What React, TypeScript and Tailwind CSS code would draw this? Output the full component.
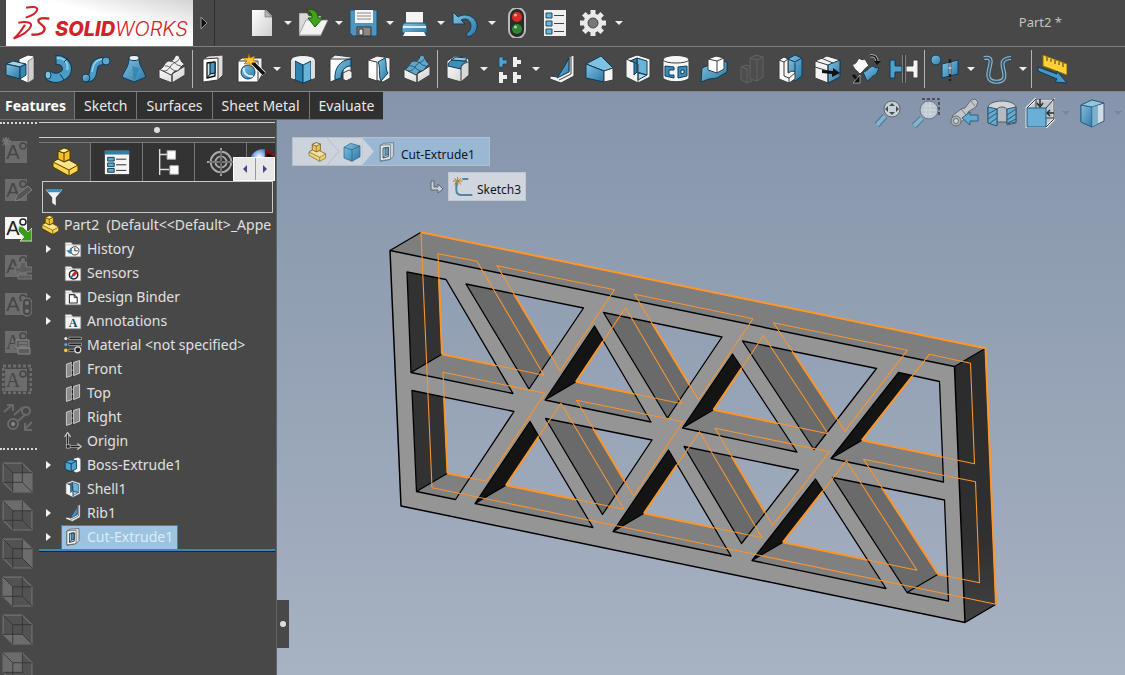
import { useState, type ReactNode } from 'react';

type Point = [number, number];

const OUT = '#0f3a57';
const INK = '#3c3c3c';

function Icon({ children, className = 'size-[30px]' }: { children: ReactNode; className?: string }) {
  return (
    <svg viewBox="0 0 30 30" className={`${className} shrink-0`} strokeLinejoin="round" fill="none" aria-hidden="true">
      {children}
    </svg>
  );
}

// gradients shared by all icons
function SharedDefs() {
  return (
    <svg className="absolute size-0" aria-hidden="true">
      <defs>
        <linearGradient id="blue" x1="0" y1="0" x2="1" y2="1">
          <stop offset="0" stopColor="#84c3e2" />
          <stop offset="1" stopColor="#2879a8" />
        </linearGradient>
        <linearGradient id="white" x1="0" y1="0" x2="1" y2="1">
          <stop offset="0" stopColor="#ffffff" />
          <stop offset="1" stopColor="#cfcfcf" />
        </linearGradient>
        <radialGradient id="ball" cx="0.35" cy="0.3" r="0.8">
          <stop offset="0" stopColor="#ffffff" />
          <stop offset="0.4" stopColor="#3f7fd0" />
          <stop offset="1" stopColor="#0a1740" />
        </radialGradient>
      </defs>
    </svg>
  );
}

/* ---------- quick access icons ---------- */

const NewIcon = () => (
  <Icon>
    <path d="M5 2h14l6 6v20H5z" fill="url(#white)" />
    <path d="M18 2v7h7z" fill="#b5b5b5" stroke="#666" strokeWidth=".6" />
  </Icon>
);
const OpenIcon = () => (
  <Icon>
    <path d="M1 5h8l2 3h12v20H1z" fill="#d9d9d9" stroke="#555" strokeWidth=".5" />
    <path d="M8 12h22l-7 15H1z" fill="#f2f2f2" stroke="#777" strokeWidth=".6" />
    <path d="M8 2c8-2 12 2 12 8h5l-8 9-7-9h4c0-4-2-7-6-8z" fill="#3fa31f" stroke="#145c05" />
  </Icon>
);
const SaveIcon = () => (
  <Icon>
    <path d="M1 2h27v26H4l-3-3z" fill="#4e96bf" stroke="#1b4c69" />
    <path d="M6 2h18v13H6z" fill="#f5f5f5" />
    <path d="M8 5h14M8 8h14M8 11h14" stroke="#888" />
    <path d="M8 19h14v9H8z" fill="#888" stroke="#333" />
    <path d="M10 21h4v6h-4z" fill="#ddd" stroke="#333" />
  </Icon>
);
const PrintIcon = () => (
  <Icon>
    <path d="M6 4h17v12H6z" fill="#f4f4f4" />
    <path d="M4 15h21l2 3v7H2v-7z" fill="url(#blue)" stroke="#1b5271" />
    <path d="M3 18h23v2H3z" fill="#d9eef8" />
    <path d="M5 24h19l2 4H3z" fill="#fafafa" />
  </Icon>
);
const UndoIcon = () => (
  <Icon>
    <path d="M2 4v12h12l-4-4c6-3 10 1 10 6 0 4-2 6-5 8l2 3c6-2 9-6 9-11 0-9-11-14-19-9z" fill="url(#blue)" stroke="#143f5c" />
  </Icon>
);
const TrafficIcon = () => (
  <Icon>
    <rect x="7" y="0" width="16" height="30" rx="8" fill="#2a2a2a" stroke="#bbb" strokeWidth="2" />
    <circle cx="15" cy="9" r="5" fill="#d72c22" />
    <circle cx="13.500" cy="7" r="1.500" fill="#f7a08f" />
    <circle cx="15" cy="21" r="5" fill="#2e8335" />
    <circle cx="13.500" cy="19" r="1.500" fill="#a6dba3" />
  </Icon>
);
const OptionsListIcon = () => (
  <Icon>
    <path d="M4 2h22v26H4z" fill="#f0f0f0" />
    <path d="M6 5h6v5H6zM6 13h6v5H6zM6 21h6v5H6z" fill="#6db4d6" stroke="#1b4c69" />
    <path d="M14 7.500h10M14 15.500h10M14 23.500h10" stroke="#444" />
  </Icon>
);
const GearIcon = () => (
  <Icon>
    <g fill="#e9e9e9">
      <path d="M12.500 2h5v26h-5z" />
      <path d="M12.500 2h5v26h-5z" transform="rotate(45 15 15)" />
      <path d="M12.500 2h5v26h-5z" transform="rotate(90 15 15)" />
      <path d="M12.500 2h5v26h-5z" transform="rotate(135 15 15)" />
      <circle cx="15" cy="15" r="9.500" />
    </g>
    <circle cx="15" cy="15" r="5" fill="#777" stroke="#444" />
  </Icon>
);

/* ---------- feature icons ---------- */

const ExtrudeIcon = () => (
  <Icon>
    <path d="M14 5l9-4 6 1v23l-6 4-9-4z" fill="#fff" stroke={INK} />
    <path d="M23 7l6-4v22l-6 4z" fill="#cfcfcf" stroke={INK} strokeWidth=".6" />
    <path d="M1 10l7-3 13 3-6 3z" fill="#9fd3ea" stroke={OUT} />
    <path d="M1 10l14 3v12L1 21z" fill="url(#blue)" stroke={OUT} />
    <path d="M15 13l6-3v11l-6 4z" fill="#3a86b0" stroke={OUT} />
  </Icon>
);
const RevolveIcon = () => (
  <Icon>
    <path d="M13 6c11-1 15 12 6 16-5 3-10 2-14-1" stroke={OUT} strokeWidth="10" />
    <path d="M13 6c11-1 15 12 6 16-5 3-10 2-14-1" stroke="#4a9cc7" strokeWidth="8" />
    <path d="M13 4c9-1 13 6 11 12" stroke="#8ccbe8" strokeWidth="2" />
    <ellipse cx="5" cy="21" rx="3" ry="4" fill="#7fc2e0" stroke={OUT} />
    <path d="M13 1v10M21 8l4-4M17 20l4 6" stroke={OUT} />
  </Icon>
);
const SweepIcon = () => (
  <Icon>
    <path d="M4 24c15 3 1-18 20-17" stroke={OUT} strokeWidth="8" />
    <path d="M4 24c15 3 1-18 20-17" stroke="#4a9cc7" strokeWidth="6" />
    <path d="M11 18c1-6 2-12 11-13" stroke="#9bd3eb" strokeWidth="1.500" />
    <circle cx="25" cy="7" r="4" fill="#5aa7cd" stroke={OUT} />
    <circle cx="5" cy="24" r="4" fill="url(#blue)" stroke={OUT} />
  </Icon>
);
const LoftIcon = () => (
  <Icon>
    <path d="M10 4c0 9-4 11-7 19l12 5 12-5C24 15 20 12 20 4z" fill="url(#blue)" stroke={OUT} />
    <path d="M13 12l2 16 5-14z" fill="#2c7cab" opacity=".6" />
    <ellipse cx="15" cy="4" rx="5" ry="2.500" fill="#f0f0f0" stroke={OUT} />
  </Icon>
);
const BoundaryShape = ({ top }: { top: string }) => (
  <Icon>
    <path d="M2 15l13 5v9L2 24zM15 20l13-8v9l-13 8z" fill="url(#white)" stroke={INK} />
    <path d="M2 15c6 0 5-9 11-8 5 0 4-6 7-6 4 1 3 8 8 9-5 2-5 7-9 7-3 0-3 3-5 4z" fill={top} stroke={INK} />
    <path d="M8 12c5-1 7 5 11 5M13 7c5 0 6 5 11 5M6 17c7 1 7-8 13-9 3-1 3-4 4-4" stroke={INK} strokeWidth=".8" />
  </Icon>
);
const BoundaryBossIcon = () => <BoundaryShape top="#eeeeee" />;
const BoundaryCutIcon = () => <BoundaryShape top="#5aa9d2" />;

function CutShape() {
  return (
    <>
      <path d="M5 5l5-3 15-1v20l-5 5-15 3z" fill="#ddd" stroke={INK} />
      <path d="M5 5l15-1v22L5 28z" fill="#fff" stroke={INK} />
      <path d="M9 9l8-1v14l-8 2z" fill="#c9e7f5" stroke="#111" strokeWidth="1.300" />
      <path d="M12 9l5-1v11l-5 1z" fill="#4497c1" stroke="#111" />
      <path d="M9 24l3-4" stroke="#111" />
    </>
  );
}
const CutExtrudeIcon = () => (
  <Icon>
    <CutShape />
  </Icon>
);
const HoleWizardIcon = () => (
  <Icon>
    <path d="M2 7l4-3h20v17l-4 7H2z" fill="#eee" stroke={INK} />
    <path d="M2 7h20v21H2z" fill="#fff" stroke={INK} />
    <circle cx="12" cy="18" r="7" fill="url(#blue)" stroke={OUT} />
    <path d="M8 14a7 7 0 009 8" stroke="#d5eefa" strokeWidth="2" />
    <path d="M15 7l13 13" stroke="#fff" strokeWidth="5" />
    <path d="M15 7l13 13" stroke="#111" strokeWidth="3.500" />
    <path d="M13 0l1 4 5-2-2 4 4 2-5 1-2 4-1-4-5 1 3-3-4-3 5 0z" fill="#ffc62e" stroke="#a15a07" strokeWidth=".6" />
  </Icon>
);
const RevolvedCutIcon = () => (
  <Icon>
    <path d="M3 6c0-6 24-6 24 0v18c-5 4-19 4-24 0z" fill="#f1f1f1" stroke={INK} />
    <path d="M7 7l8 4v18l-8-3z" fill="#2f83b2" stroke={OUT} />
    <path d="M23 7l-8 4v18l8-3z" fill="#69b4d9" stroke={OUT} />
    <path d="M3 6l4 1v18l-4-1zM27 6l-4 1v18l4-1z" fill="#ddd" />
  </Icon>
);
const SweptCutIcon = () => (
  <Icon>
    <path d="M4 5l5-4 16 2v20l-5 4-3-1V13H4z" fill="#f1f1f1" stroke={INK} />
    <path d="M4 5h21C16 5 11 14 12 25l-8 3z" fill="#fff" stroke={INK} />
    <path d="M25 5C14 6 8 14 9 26l6-2c0-7 4-12 10-12z" fill="url(#blue)" stroke={OUT} />
    <path d="M17 19l6-3 3 2v6l-6 3-3-2z" fill="#eee" stroke={INK} />
  </Icon>
);
const LoftedCutIcon = () => (
  <Icon>
    <path d="M4 6l9-4 13 2v20l-7 4-15-4z" fill="#f0f0f0" stroke={INK} />
    <path d="M4 6l9 2v19l-9-3z" fill="#fff" stroke={INK} />
    <path d="M14 8l7-4c2 6 0 11 3 15l-7 8c-3-6 0-12-3-19z" fill="url(#blue)" stroke={OUT} />
  </Icon>
);
const FilletIcon = () => (
  <Icon>
    <path d="M4 7l8-5 12 1 2 4v14l-8 7-14-4z" fill="url(#white)" stroke={INK} />
    <path d="M5 12c0-3 2-5 4-6l15 1c-4 2-6 4-6 8z" fill="#3d8fbb" stroke={OUT} />
    <path d="M8 6l5-3 11 1-2 3z" fill="#8cc8e3" stroke={OUT} />
    <path d="M18 15c0-4 3-6 8-7v13l-8 7z" fill="#d8d8d8" stroke={INK} />
  </Icon>
);
const PatternIcon = () => (
  <Icon>
    <path d="M4 3h4v3h4v4H8v3H4z" fill="#4fa3cd" stroke="#123c55" strokeWidth=".6" />
    <path d="M18 3h4v3h4v4h-4v3h-4zM4 18h4v3h4v4H8v4H4zM18 18h4v3h4v4h-4v4h-4z" fill="#eee" />
  </Icon>
);
const RibShape = () => (
  <>
    <path d="M22 3l5-2v21l-13 7-11-4v-3l8 1 11-6z" fill="#f2f2f2" stroke={INK} />
    <path d="M22 4v14l-12 6C14 18 18 12 22 4z" fill="url(#blue)" stroke={OUT} />
    <path d="M24 3v17l-12 6" stroke={INK} />
  </>
);
const RibIcon = () => (
  <Icon>
    <RibShape />
  </Icon>
);
const DraftIcon = () => (
  <Icon>
    <path d="M1 10L16 2l12 12-9 3z" fill="#7fc1e0" stroke={OUT} />
    <path d="M1 10l18 7v11L1 24z" fill="url(#blue)" stroke={OUT} />
    <path d="M19 17l9-3v12l-9 2z" fill="#f5f5f5" stroke={INK} />
  </Icon>
);
const ShellShape = () => (
  <>
    <path d="M3 5l11-4 13 4v18l-12 6-12-6z" fill="#f4f4f4" stroke={INK} />
    <path d="M14 4l10 3v14l-10-3z" fill="#69b5da" stroke={OUT} />
    <path d="M14 4v14l-3 3V8l-4-1z" fill="#2d7fad" stroke={OUT} />
    <path d="M15 19l9 2-9 5z" fill="#a8d9ee" stroke={OUT} />
    <path d="M3 5l12 5v19" stroke={INK} />
  </>
);
const ShellIcon = () => (
  <Icon>
    <ShellShape />
  </Icon>
);
const WrapIcon = () => (
  <Icon>
    <path d="M2 6c0-6 26-6 26 0v18c-4 5-22 5-26 0z" fill="#f6f6f6" stroke={INK} />
    <path d="M2 6c2 4 24 4 26 0" stroke={INK} />
    <path d="M4 12l9 1v3H8v5h5v3l-9-2z" fill="#3d8fbb" stroke={OUT} />
    <path d="M26 12l-9 1v11l9-2zM23 16v3l-3 1v-4z" fill="#3d8fbb" stroke={OUT} fillRule="evenodd" />
  </Icon>
);
const IntersectIcon = () => (
  <Icon>
    <path d="M3 14l7-3 13-4 5 1v10l-10 6-8 1-8 3z" fill="url(#blue)" stroke={OUT} />
    <path d="M9 5l8-3 8 2v11l-7 4-9-3z" fill="#fff" stroke={INK} />
    <path d="M9 5l9 2 7-3M18 7v12" stroke={INK} />
  </Icon>
);
const DisabledIcon = () => (
  <Icon>
    <g fill="#4d4d4d" stroke="#636363">
      <path d="M4 13l5-2 6 2v14l-5 2-6-3z" />
      <path d="M13 4l6-3 7 2v20l-6 4-7-2z" />
      <path d="M13 4l7 2 6-3M20 6v21M4 13l6 2v14" />
    </g>
  </Icon>
);
const SplitIcon = () => (
  <Icon>
    <path d="M13 5l7-4 7 3v18l-7 5-7-3z" fill="url(#blue)" stroke={OUT} />
    <path d="M4 6l5-3 4 2v14l4-2 3 1v7l-6 4-10-4z" fill="#f7f7f7" stroke={INK} />
    <path d="M4 6l5 2v14l5 2v5M9 8l4-3M14 24l6-5" stroke={INK} />
    <path d="M20 9v9M13 5l7 3 7-4" stroke={OUT} />
  </Icon>
);
const MoveFaceIcon = () => (
  <Icon>
    <path d="M2 7l12-5 13 4v17l-12 6-13-5z" fill="#f2f2f2" stroke={INK} />
    <path d="M15 11l12-5v17l-12 6z" fill="url(#blue)" stroke={OUT} />
    <path d="M2 7l13 4v18M8 4l12 5M2 13l13 4" stroke={INK} />
    <path d="M9 16l11 1v-3l7 5-8 4v-3l-10-1z" fill="#111" />
  </Icon>
);
const FlexIcon = () => (
  <Icon>
    <path d="M1 10c4 1 5-3 7-6 2 2 4 2 6 1l4 7c-4 1-5 5-9 8-2-3-5-3-8-10z" fill="#fafafa" stroke={INK} />
    <path d="M12 18c4 0 6-5 10-6 2 2 4 2 6 2l-3 7c-4 0-6 5-9 6z" fill="url(#blue)" stroke={OUT} />
    <path d="M19 2c5-1 7 2 7 6" stroke="#ccc" strokeWidth="3" />
    <path d="M19 2c5-1 7 2 7 6" stroke="#111" strokeWidth="1.500" />
    <path d="M23 7h7l-4 4z" fill="#111" />
    <path d="M2 21l5 5" stroke="#111" strokeWidth="2.500" />
    <path d="M9 21v8H2z" fill="#111" stroke="#ddd" strokeWidth=".6" />
  </Icon>
);
const MirrorIcon = () => (
  <Icon>
    <path d="M1 6h5v6h7v6H6v6H1z" fill="#4ea1cb" stroke={OUT} />
    <path d="M29 6h-5v6h-7v6h7v6h5z" fill="#f3f3f3" stroke={INK} />
    <path d="M15 1v28" stroke="#bbb" strokeWidth="3" />
    <path d="M15 1v28" stroke="#111" strokeWidth="1.500" />
  </Icon>
);
const RefGeometryIcon = () => (
  <Icon>
    <circle cx="6" cy="6" r="5" fill="url(#blue)" stroke={OUT} />
    <path d="M12 10l16-4v14l-16 4z" fill="url(#blue)" stroke={OUT} />
    <path d="M20 5v22" stroke="#222" strokeWidth="2.500" strokeDasharray="8 2" />
    <path d="M20 9v11" stroke="#eee" />
  </Icon>
);
const CurvesIcon = () => (
  <Icon>
    <path d="M2 4c14-3 1 14 5 20 2 5 13 5 15 0 3-6-9-19 7-20" stroke="#8dbbd3" strokeWidth="4" />
    <path d="M2 4c14-3 1 14 5 20 2 5 13 5 15 0 3-6-9-19 7-20" stroke="#33546b" strokeWidth="1.800" />
  </Icon>
);
const Instant3DIcon = () => (
  <Icon>
    <path d="M6 1l24 9v11L6 12z" fill="#ffd03a" stroke="#8f6c07" />
    <path d="M10 3v4M14 5v3M18 6v4M22 8v3M26 9v4" stroke="#333" />
    <path d="M1 13l19 7v-3l10 12-12-1 2-3L1 17z" fill="#4797c4" stroke={OUT} />
  </Icon>
);

/* ---------- view icons over the model ---------- */

const ZoomFitIcon = () => (
  <Icon>
    <path d="M12 18l-8 9" stroke="#4c6c80" strokeWidth="6" />
    <path d="M12 18l-8 9" stroke="#7cb9d7" strokeWidth="4" />
    <circle cx="19" cy="11" r="8" fill="#cfd8df" stroke="#56626c" />
    <path d="M19 5l3 3h-6zM19 17l3-3h-6zM12 11l3-3v6zM26 11l-3-3v6z" fill="#444" />
  </Icon>
);
const ZoomAreaIcon = () => (
  <Icon>
    <path d="M11 1h17v18" stroke="#333" strokeDasharray="3 2" strokeWidth="1.500" />
    <path d="M11 20l-8 8" stroke="#4c6c80" strokeWidth="6" />
    <path d="M11 20l-8 8" stroke="#7cb9d7" strokeWidth="4" />
    <circle cx="18" cy="12" r="9" fill="#c3cdd5" stroke="#68747e" />
    <path d="M12 8h12M11 12h14M12 16h12M15 4v15M19 4v16" stroke="#dfe6ea" strokeWidth=".8" />
  </Icon>
);
const PreviousViewIcon = () => (
  <Icon>
    <path d="M3 18L12 11l4-1 6-8 4-1 3 3-2 5-8 5-1 4-8 8z" fill="#c9ccd0" stroke="#666" />
    <path d="M12 11l6 7M22 3l4 5" stroke="#777" />
    <circle cx="7" cy="23" r="5" fill="#b2b7bd" stroke="#666" />
    <circle cx="7" cy="23" r="2.500" fill="#ddd" stroke="#666" />
    <path d="M13 20l8-6v3h8v6h-8v4z" fill="#5facd5" stroke="#27597a" />
  </Icon>
);
const SectionIcon = () => (
  <Icon>
    <path d="M1 9C3 1 27 1 29 9v16l-9 2V14c0-3-10-3-10 0v13l-9-2z" fill="#d7dce1" stroke="#555" />
    <path d="M10 12c0-4 10-4 10 0v12H10z" fill="#b9bfc6" stroke="#555" />
    <path d="M1 9l9 2v17l-9-3zM29 9l-9 2v15l9-2z" fill="#62add3" stroke="#24506c" />
    <path d="M1 16l9-5M1 21l9-6M3 25l7-5M20 17l9-6M20 22l9-6M21 25l8-4" stroke="#24506c" />
  </Icon>
);
const ViewOrientIcon = () => (
  <Icon>
    <path d="M2 10L11 1h18v20l-8 8H2z" fill="#c4ccd4" stroke="#eef2f5" strokeWidth="3" />
    <path d="M2 10L11 1h18v20l-8 8M21 10l8-9M11 1v9M21 20h8" stroke="#333" />
    <path d="M2 10h19v19H2z" fill="#69b2d9" stroke="#1f5474" />
    <path d="M15 1v6M12 5l3 4 3-4M29 15h-6M25 12l-3 3 3 3" stroke="#222" strokeWidth="1.500" />
  </Icon>
);
const DisplayStyleIcon = () => (
  <Icon>
    <path d="M4 7l11-5 12 3v18l-12 6-11-5z" fill="#dbe3ea" stroke="#27597a" />
    <path d="M4 7l11 2v20L4 24z" fill="url(#blue)" stroke="#27597a" />
    <path d="M4 7l11-5 12 3-12 4z" fill="#94cde6" stroke="#27597a" />
    <path d="M15 9l6-2v19l-6 3z" fill="#5a9fc4" opacity=".7" />
  </Icon>
);

/* ---------- tree and panel icons ---------- */

function PartIcon({ className }: { className?: string }) {
  return (
    <Icon className={className}>
      <path d="M3 15l5-3V3l6-2 6 2v11l8 4v6l-9 5-16-9z" fill="#ffd44c" stroke="#4e3c00" />
      <path d="M8 4l6 2 6-3v9l-6 3-6-3z" fill="#f7c02b" stroke="#4e3c00" />
      <path d="M3 15l5-3 6 3 5-2 9 5-9 5z" fill="#ffe58a" stroke="#4e3c00" />
      <path d="M8 4l6-3 6 2-6 3z" fill="#ffeaa0" stroke="#4e3c00" />
      <path d="M19 23v6M14 6v9" stroke="#4e3c00" />
    </Icon>
  );
}
const PropertyIcon = () => (
  <Icon className="size-7">
    <path d="M2 3h26v25H2z" fill="#f6f6f6" />
    <path d="M2 3h26v4H2z" fill="#2e7fae" />
    <path d="M5 10h7v4H5zM5 16h7v4H5zM5 22h7v4H5z" fill="#5aabd0" stroke="#17364a" />
    <path d="M14 12h11M14 18h11M14 24h11" stroke="#222" />
  </Icon>
);
const ConfigIcon = () => (
  <Icon className="size-7">
    <path d="M5 1v28M5 7h8M5 23h10" stroke="#ddd" strokeWidth="1.500" />
    <path d="M13 3h9v9h-9zM16 19h9v9h-9z" fill="#fff" stroke="#bbb" />
  </Icon>
);
const TargetIcon = () => (
  <Icon className="size-7">
    <g stroke="#aaa" strokeWidth="2">
      <circle cx="15" cy="15" r="11" />
      <circle cx="15" cy="15" r="6" />
      <path d="M15 0v30M0 15h30" />
    </g>
    <path d="M15 2v26M2 15h26" stroke="#222" strokeWidth=".8" />
  </Icon>
);
const AppearanceIcon = () => (
  <Icon className="size-7">
    <circle cx="15" cy="15" r="14" fill="url(#ball)" />
    <path d="M17 1a14 14 0 0112 14H17z" fill="#7a1010" />
    <path d="M19 6c4 0 7 3 8 9h-8z" fill="#111" />
  </Icon>
);

function FolderIcon({ children }: { children: ReactNode }) {
  return (
    <Icon className="size-[18px]">
      <path d="M2 4h10l3 4h13v20H2z" fill="#f5f5f5" stroke="#888" />
      <path d="M2 8h26" stroke="#aaa" />
      {children}
    </Icon>
  );
}
const HistoryIcon = () => (
  <FolderIcon>
    <circle cx="18" cy="18" r="7" stroke="#333" strokeWidth="1.500" />
    <path d="M18 13v5h5" stroke="#333" strokeWidth="1.500" />
    <path d="M12 22a7 7 0 011-9" stroke="#2c83b5" strokeWidth="3" />
    <path d="M4 17h10l-5 6z" fill="#2c83b5" />
  </FolderIcon>
);
const SensorIcon = () => (
  <FolderIcon>
    <circle cx="16" cy="18" r="7" fill="#fff" stroke="#222" strokeWidth="2.500" />
    <path d="M11 23l5-5" stroke="#2c6ab5" strokeWidth="3" />
    <path d="M15 19l6-6" stroke="#d02020" strokeWidth="5" />
  </FolderIcon>
);
const BinderIcon = () => (
  <FolderIcon>
    <path d="M9 11h8l5 5v9H9z" fill="#fff" stroke="#333" strokeWidth="1.800" />
    <path d="M17 11v5h5" stroke="#333" strokeWidth="1.500" />
  </FolderIcon>
);
const AnnotationIcon = () => (
  <FolderIcon>
    <text x="15" y="25" textAnchor="middle" fontSize="20" fontWeight="700" fill="#174a6b" fontFamily="Liberation Serif, serif">
      A
    </text>
  </FolderIcon>
);
const MaterialIcon = () => (
  <Icon className="size-[18px]">
    <circle cx="3" cy="4" r="2.500" fill="#eee" />
    <circle cx="3" cy="14" r="2.500" fill="#5aa9e0" />
    <circle cx="3" cy="24" r="3" fill="#f5c93a" />
    <path d="M8 2h21v4H8zM8 12h21v4H8zM8 22h10v4H8z" fill="#222" stroke="#ccc" />
    <circle cx="23" cy="23" r="5" fill="#222" stroke="#ddd" strokeWidth="2" />
  </Icon>
);
const PlaneIcon = () => (
  <Icon className="size-[18px]">
    <path d="M4 7l9-3v22l-9 3zM16 4l10-3v21l-10 4z" fill="#8a8a8a" stroke="#d5d5d5" strokeWidth="1.500" />
    <path d="M14 2v26" stroke="#222" strokeWidth="2" strokeDasharray="6 2" />
  </Icon>
);
const OriginIcon = () => (
  <Icon className="size-[18px]">
    <path d="M6 3v21h20" stroke="#ccc" strokeWidth="4" />
    <path d="M6 3v21h20" stroke="#222" strokeWidth="2" />
    <path d="M1 8l5-7 5 7M22 19l7 5-7 5" stroke="#ccc" strokeWidth="2" />
    <path d="M4 21h6v6H4z" fill="#222" stroke="#ddd" />
  </Icon>
);
const BossSmallIcon = () => (
  <Icon className="size-[18px]">
    <path d="M16 4l8-2 4 3v20l-7 3-5-2z" fill="#fff" stroke={INK} />
    <path d="M2 10l8-4 11 2v13l-9 5-10-4z" fill="#4fa3cd" stroke={OUT} strokeWidth="1.500" />
    <path d="M2 10l10 3 9-5M12 13v13" stroke={OUT} strokeWidth="1.500" />
  </Icon>
);
const ShellSmallIcon = () => (
  <Icon className="size-[18px]">
    <ShellShape />
  </Icon>
);
const RibSmallIcon = () => (
  <Icon className="size-[18px]">
    <RibShape />
  </Icon>
);
const CutSmallIcon = () => (
  <Icon className="size-[18px]">
    <CutShape />
  </Icon>
);

/* ---------- annotation strip ---------- */

function NoteIcon({ active = false, serif = false, children }: { active?: boolean; serif?: boolean; children?: ReactNode }) {
  const ink = active ? '#222' : '#464646';
  return (
    <Icon>
      <path d="M3 5h22v22H3z" fill={active ? '#f5f5f5' : '#6c6c6c'} />
      <text x="11" y="23" textAnchor="middle" fontSize="20" fill={ink} fontFamily={serif ? 'Liberation Serif, serif' : 'Liberation Sans, sans-serif'}>
        A
      </text>
      <circle cx="21" cy="10" r="3" stroke={ink} strokeWidth="1.500" />
      {children}
    </Icon>
  );
}

const noteTools = [
  { label: 'New annotation', icon: <NoteIcon><path d="M4 1v9M0 5h9M1 2l6 7M7 2l-6 7" stroke="#777" strokeWidth="1.500" /></NoteIcon> },
  { label: 'Edit annotation', icon: <NoteIcon><path d="M13 27l2-6 11-9 4 4-11 9z" fill="#555" stroke="#808080" /></NoteIcon> },
  {
    label: 'Show annotation',
    active: true,
    icon: <NoteIcon active><path d="M17 14l4 1 5 5 4-4v13H18l4-4-6-6z" fill="#3c9a1e" stroke="#c9e6bd" /></NoteIcon>,
  },
  { label: 'Add annotation', icon: <NoteIcon><path d="M18 12h6v5h6v5h-6v1h-6v-1h-5v-5h5zM16 25h14v4H16z" fill="#5d5d5d" stroke="#7a7a7a" /></NoteIcon> },
  { label: 'Lock annotation', icon: <NoteIcon><rect x="20" y="10" width="10" height="18" rx="5" fill="#4a4a4a" stroke="#808080" /><circle cx="25" cy="15" r="2" fill="#777" /><circle cx="25" cy="23" r="2" fill="#777" /></NoteIcon> },
  { label: 'Print annotation', icon: <NoteIcon serif><path d="M14 14h13v8H14zM16 22h12v6H16z" fill="#5d5d5d" stroke="#8a8a8a" /><path d="M17 17h8M17 20h8" stroke="#8a8a8a" /></NoteIcon> },
  { label: 'Select annotation', icon: <NoteIcon serif><path d="M1 2h28v27H1z" stroke="#6c6c6c" strokeWidth="3" strokeDasharray="3 2" /></NoteIcon> },
  {
    label: 'Link annotation',
    icon: (
      <Icon>
        <g stroke="#6a6a6a" strokeWidth="2">
          <circle cx="11" cy="22" r="5" />
          <circle cx="24" cy="9" r="4" />
          <path d="M2 10l8-7M5 3h6v6M12 13l9-8M16 19l8-7M30 20l-7 7M23 21v7h7" />
        </g>
        <circle cx="11" cy="22" r="2" fill="#888" />
      </Icon>
    ),
  },
];

// filled face of each standard view cube
const cubeFaces = [
  'M11 11h18v18H11z',
  'M2 2h18l9 9H11z',
  'M20 2l9 9v18l-9-9z',
  'M2 2l9 9v18l-9-9z',
  'M2 20h18l9 9H11z',
  'M2 2h18v18H2z',
];

function CubeIcon({ face }: { face: string }) {
  return (
    <Icon className="size-8">
      <path d="M2 2h18l9 9v18H11l-9-9z" fill="#525252" stroke="#747474" />
      <path d={face} fill="#6c6c6c" />
      <path d="M2 2l9 9h18M11 11v18M20 2v18M2 20h18l9 9" stroke="#343434" strokeWidth=".8" />
    </Icon>
  );
}

/* ---------- toolbars ---------- */

type Tool = { label: string; icon?: ReactNode; menu?: boolean; sep?: boolean; disabled?: boolean };

const quickTools: Tool[] = [
  { label: 'New', icon: <NewIcon />, menu: true },
  { label: 'Open', icon: <OpenIcon />, menu: true },
  { label: 'Save', icon: <SaveIcon />, menu: true },
  { label: 'Print', icon: <PrintIcon />, menu: true },
  { label: 'Undo', icon: <UndoIcon />, menu: true },
  { label: 'Rebuild', icon: <TrafficIcon /> },
  { label: 'File Properties', icon: <OptionsListIcon /> },
  { label: 'Options', icon: <GearIcon />, menu: true },
];

const featureTools: Tool[] = [
  { label: 'Extruded Boss', icon: <ExtrudeIcon /> },
  { label: 'Revolved Boss', icon: <RevolveIcon /> },
  { label: 'Swept Boss', icon: <SweepIcon /> },
  { label: 'Lofted Boss', icon: <LoftIcon /> },
  { label: 'Boundary Boss', icon: <BoundaryBossIcon /> },
  { label: 'sep-1', sep: true },
  { label: 'Extruded Cut', icon: <CutExtrudeIcon /> },
  { label: 'Hole Wizard', icon: <HoleWizardIcon />, menu: true },
  { label: 'Revolved Cut', icon: <RevolvedCutIcon /> },
  { label: 'Swept Cut', icon: <SweptCutIcon /> },
  { label: 'Lofted Cut', icon: <LoftedCutIcon /> },
  { label: 'Boundary Cut', icon: <BoundaryCutIcon /> },
  { label: 'sep-2', sep: true },
  { label: 'Fillet', icon: <FilletIcon />, menu: true },
  { label: 'Linear Pattern', icon: <PatternIcon />, menu: true },
  { label: 'Rib', icon: <RibIcon /> },
  { label: 'Draft', icon: <DraftIcon /> },
  { label: 'Shell', icon: <ShellIcon /> },
  { label: 'Wrap', icon: <WrapIcon /> },
  { label: 'Intersect', icon: <IntersectIcon /> },
  { label: 'Combine', icon: <DisabledIcon />, disabled: true },
  { label: 'Split', icon: <SplitIcon /> },
  { label: 'Move Face', icon: <MoveFaceIcon /> },
  { label: 'Flex', icon: <FlexIcon /> },
  { label: 'Mirror', icon: <MirrorIcon /> },
  { label: 'sep-3', sep: true },
  { label: 'Reference Geometry', icon: <RefGeometryIcon />, menu: true },
  { label: 'Curves', icon: <CurvesIcon />, menu: true },
  { label: 'sep-4', sep: true },
  { label: 'Instant3D', icon: <Instant3DIcon /> },
];

const viewTools: Tool[] = [
  { label: 'Zoom to Fit', icon: <ZoomFitIcon /> },
  { label: 'Zoom to Area', icon: <ZoomAreaIcon /> },
  { label: 'Previous View', icon: <PreviousViewIcon /> },
  { label: 'Section View', icon: <SectionIcon /> },
  { label: 'View Orientation', icon: <ViewOrientIcon />, menu: true },
  { label: 'Display Style', icon: <DisplayStyleIcon />, menu: true },
];

function ToolRow({ tools, caret = 'w-[14px] text-[#eeeeee]' }: { tools: Tool[]; caret?: string }) {
  return (
    <div className="flex items-center">
      {tools.map((t) =>
        t.sep ? (
          <div key={t.label} className="mx-px h-[38px] w-px shrink-0 bg-[#b4b4b4]" />
        ) : (
          <div key={t.label} className="flex shrink-0 items-center">
            <button aria-label={t.label} disabled={t.disabled} className="flex w-[38px] justify-center">
              {t.icon}
            </button>
            {t.menu && (
              <button aria-label={`${t.label} menu`} className={`flex h-6 items-center justify-center ${caret}`}>
                <svg viewBox="0 0 8 4" className="h-1 w-2" fill="currentColor">
                  <path d="M0 0h8L4 4z" />
                </svg>
              </button>
            )}
          </div>
        ),
      )}
    </div>
  );
}

function Logo() {
  return (
    <div className="flex h-[46px] w-[187px] shrink-0 items-center bg-linear-to-tr from-white from-60% to-[#d4d4d4] pl-1.5 text-[#d2232a]">
      <svg viewBox="24 12 114 114" className="h-[38px] w-[38px]" fill="none" stroke="currentColor" aria-hidden="true">
        <path d="M66 23c18-4 34-3 34 6-2 9-18 18-35 24" strokeWidth="6" />
        <path d="M43 68c24-5 44-1 37 12-6 14-28 27-51 36 16-12 24-26 34-42" strokeWidth="6" />
        <path d="M136 56c-18-3-33-1-33 7 0 9 20 12 19 24-2 14-20 18-40 17" strokeWidth="7" />
      </svg>
      <span className="mt-3 ml-[5px] font-[Inter,sans-serif] text-xl leading-6 italic">
        <b className="font-extrabold">SOLID</b>
        <span className="font-light">WORKS</span>
      </span>
    </div>
  );
}

/* ---------- feature tree ---------- */

type TreeItem = { name: string; icon: ReactNode; expandable?: boolean };

const treeItems: TreeItem[] = [
  { name: 'History', icon: <HistoryIcon />, expandable: true },
  { name: 'Sensors', icon: <SensorIcon /> },
  { name: 'Design Binder', icon: <BinderIcon />, expandable: true },
  { name: 'Annotations', icon: <AnnotationIcon />, expandable: true },
  { name: 'Material <not specified>', icon: <MaterialIcon /> },
  { name: 'Front', icon: <PlaneIcon /> },
  { name: 'Top', icon: <PlaneIcon /> },
  { name: 'Right', icon: <PlaneIcon /> },
  { name: 'Origin', icon: <OriginIcon /> },
  { name: 'Boss-Extrude1', icon: <BossSmallIcon />, expandable: true },
  { name: 'Shell1', icon: <ShellSmallIcon /> },
  { name: 'Rib1', icon: <RibSmallIcon />, expandable: true },
  { name: 'Cut-Extrude1', icon: <CutSmallIcon />, expandable: true },
];

function FeatureTree() {
  const [selected, setSelected] = useState('Cut-Extrude1');
  return (
    <ul className="text-sm whitespace-nowrap text-[#e0e0e0]">
      <li>
        <button className="flex h-6 items-center gap-1 pl-px">
          <PartIcon className="size-5" />
          <span className="whitespace-pre">{'Part2  (Default<<Default>_Appe'}</span>
        </button>
      </li>
      {treeItems.map((item) => (
        <li key={item.name} className="flex h-6 items-center pl-1.5">
          <span className="flex w-[17px] shrink-0">
            {item.expandable && (
              <button aria-label={`Expand ${item.name}`}>
                <svg viewBox="0 0 6 8" className="ml-px h-2 w-1.5" fill="#f2f2f2">
                  <path d="M0 0l5 4-5 4z" />
                </svg>
              </button>
            )}
          </span>
          <button
            onClick={() => setSelected(item.name)}
            className={`flex h-[23px] items-center gap-[5px] pr-1 pl-0.5 ${
              selected === item.name ? 'bg-[#9cc3e0] text-[#dcecf8] outline outline-[#3f7fa8]' : ''
            }`}
          >
            {item.icon}
            {item.name}
          </button>
        </li>
      ))}
    </ul>
  );
}

const panelTabs = [
  { label: 'FeatureManager', icon: <PartIcon className="size-[30px]" /> },
  { label: 'PropertyManager', icon: <PropertyIcon /> },
  { label: 'ConfigurationManager', icon: <ConfigIcon /> },
  { label: 'DimXpertManager', icon: <TargetIcon /> },
  { label: 'DisplayManager', icon: <AppearanceIcon /> },
];

function SidePanel() {
  return (
    <div className="flex w-[236px] shrink-0 flex-col overflow-hidden pt-0.5">
      <div className="flex h-4 items-center justify-center border-y border-[#cfcfcf]">
        <span className="size-1.5 rounded-full bg-[#dedede]" />
      </div>
      <div className="relative mt-1 flex h-[39px] border-t border-[#777777]">
        {panelTabs.map((t, i) => (
          <button
            key={t.label}
            aria-label={t.label}
            className={`flex w-[52px] shrink-0 items-center border-r border-[#777777] ${i === 0 ? '' : 'bg-[#333333]'} ${
              i === 4 ? 'justify-start pl-0.5' : 'justify-center'
            }`}
          >
            {t.icon}
          </button>
        ))}
        <div className="absolute right-0 bottom-0 flex h-6 border border-white bg-[#e8e8e8] text-[#46468c]">
          <button aria-label="Previous tab" className="flex w-[22px] items-center justify-center border-r border-[#999999]">
            <svg viewBox="0 0 4 8" className="h-2 w-1" fill="currentColor">
              <path d="M4 0v8L0 4z" />
            </svg>
          </button>
          <button aria-label="Next tab" className="flex w-[18px] items-center justify-center">
            <svg viewBox="0 0 4 8" className="h-2 w-1" fill="currentColor">
              <path d="M0 0v8l4-4z" />
            </svg>
          </button>
        </div>
      </div>
      <label className="mr-0.5 ml-[3px] flex h-8 items-center border border-[#c9c9c9] pl-0.5">
        <Icon className="size-[18px]">
          <path d="M1 3h28L18 16v13l-6-4v-9z" fill="#f2f2f2" />
          <path d="M1 2h28l-4 5H5z" fill="#3b93c5" />
        </Icon>
        <input aria-label="Filter" className="min-w-0 flex-1 bg-transparent px-1 text-sm text-white outline-none" />
      </label>
      <FeatureTree />
      <div className="h-[3px] shrink-0 border-b border-[#15157e] bg-[#3c85c0]" />
    </div>
  );
}

function Grip() {
  return <div className="w-full border-t-2 border-dotted border-[#d5d5d5]" />;
}

function ToolStrip() {
  return (
    <div className="flex w-[39px] shrink-0 flex-col overflow-hidden pt-0.5 pr-0.5">
      <Grip />
      <div className="mt-2 flex flex-col">
        {noteTools.map((t) => (
          <button key={t.label} aria-label={t.label} disabled={!t.active} className="flex h-[38px] shrink-0 items-center pl-0.5">
            {t.icon}
          </button>
        ))}
      </div>
      <div className="mt-2 mb-1 h-px bg-[#777777]" />
      <Grip />
      <div className="mt-2 flex flex-col">
        {cubeFaces.map((face, i) => (
          <button key={face} aria-label={`Standard view ${i + 1}`} disabled className="flex h-[38px] shrink-0 items-center pl-px">
            <CubeIcon face={face} />
          </button>
        ))}
      </div>
    </div>
  );
}

/* ---------- model ---------- */

// extrusion depth on screen
const DEPTH: Point = [31, -18.3];

const outer: Point[] = [[390, 251.5], [954.5, 367.5], [965, 623.5], [401, 507]];

// every pocket is listed clockwise from its top left corner
const pockets: Point[][] = [
  [[407, 273], [446, 280.5], [513, 394.5], [411, 373.5]],
  [[466, 285], [583.5, 309], [529, 390]],
  [[594.5, 327], [651, 423], [545, 401]],
  [[603.5, 313.5], [722, 338], [667.5, 419]],
  [[732.5, 355], [797, 453], [682.5, 429]],
  [[742.5, 342], [876.5, 369.5], [814, 450.5]],
  [[898.5, 373.5], [939.5, 382.5], [943.5, 483], [831, 459.5]],
  [[412, 391.5], [514, 412.5], [455.5, 500.5], [416.5, 492.5]],
  [[530, 422.5], [593, 528.5], [475, 504.5]],
  [[545.5, 419.5], [652, 441], [602.5, 515.5]],
  [[668.5, 451], [731, 557], [613, 532.5]],
  [[684, 447.5], [798.5, 471], [741.5, 544.5]],
  [[815.5, 480], [886, 589.5], [752, 561.5]],
  [[832.5, 478.5], [944.5, 501], [948.5, 602], [907, 593.5]],
];

const back = ([x, y]: Point): Point => [x + DEPTH[0], y + DEPTH[1]];
const pts = (list: Point[]) => list.map((p) => p.join(',')).join(' ');

function wallColor([ax, ay]: Point, [bx, by]: Point) {
  const dx = bx - ax;
  const dy = by - ay;
  if (Math.abs(dx) > Math.abs(dy) * 2) return '#808080';
  if (Math.abs(dx) < Math.abs(dy) / 4) return '#323232';
  return dx * dy > 0 ? '#6a6a6a' : '#141414';
}

function Pocket({ points, id }: { points: Point[]; id: string }) {
  const edges = points.map((a, i) => [a, points[(i + 1) % points.length]] as [Point, Point]);
  // only walls whose inner side faces the viewer are drawn
  const walls = edges.filter(([a, b]) => -(b[1] - a[1]) * DEPTH[0] + (b[0] - a[0]) * DEPTH[1] > 0);
  return (
    <g>
      <clipPath id={id}>
        <polygon points={pts(points)} />
      </clipPath>
      <g clipPath={`url(#${id})`}>
        {walls.map(([a, b]) => (
          <polygon key={pts([a, b])} points={pts([a, b, back(b), back(a)])} fill={wallColor(a, b)} />
        ))}
        {walls.length > 1 && <polyline points={pts([walls[0][1], back(walls[0][1])])} stroke="#000" strokeWidth="1.2" />}
        {walls.map(([a, b]) => (
          <polyline key={pts([b, a])} points={pts([back(a), back(b)])} stroke="#ff962b" strokeWidth="2" />
        ))}
      </g>
      <polygon points={pts(points)} stroke="#000" strokeWidth="1.3" />
    </g>
  );
}

function Model() {
  const [tl, tr, br] = outer;
  const face = [outer, ...pockets].map((p) => `M${p.map((q) => q.join(' ')).join('L')}Z`).join('');
  return (
    <svg viewBox="388 230 612 396" className="h-[396px] w-[612px] shrink-0" fill="none" strokeLinejoin="round" role="img" aria-label="Part2">
      <linearGradient id="side" x1="0" y1="0" x2="0" y2="1">
        <stop offset="0" stopColor="#2b2b2b" />
        <stop offset="0.7" stopColor="#303030" />
        <stop offset="1" stopColor="#414141" />
      </linearGradient>
      <polygon points={pts([tl, back(tl), back(tr), tr])} fill="#7e7e7e" />
      <polygon points={pts([tr, back(tr), back(br), br])} fill="url(#side)" />
      <path d={face} fill="#959595" fillRule="evenodd" />
      <polyline points={pts([tl, back(tl)])} stroke="#000" strokeWidth="1.3" />
      <polyline points={pts([tr, back(tr)])} stroke="#000" strokeWidth="1.3" />
      <polyline points={pts([br, back(br)])} stroke="#000" strokeWidth="1.3" />
      <polygon points={pts(outer)} stroke="#000" strokeWidth="1.5" />
      {pockets.map((p, i) => (
        <Pocket key={i} points={p} id={`pocket-${i}`} />
      ))}
      <g stroke="#f7942e" strokeWidth="1.1">
        <polygon points={pts(outer.map(back))} />
        {pockets.map((p, i) => (
          <polygon key={i} points={pts(p.map(back))} />
        ))}
      </g>
      <polyline points={pts([back(tl), back(tr), back(br)])} stroke="#ff962b" strokeWidth="2" />
    </svg>
  );
}

function Breadcrumb() {
  return (
    <div className="pt-[17px] pl-[15px] font-['Noto_Sans',sans-serif] text-xs text-[#10161c]">
      <div className="flex h-[29px] w-fit items-stretch border border-[#b3c0cd] bg-[#9ab7d3]">
        <div className="flex items-center bg-[#cdd3dc] pl-[14px]">
          <button aria-label="Part2">
            <PartIcon className="size-5 opacity-75" />
          </button>
          <svg viewBox="0 0 13 28" className="h-full w-[13px]" fill="none" stroke="#b5bcc6">
            <path d="M0 0l12 14L0 28" />
          </svg>
          <button aria-label="Body" className="ml-0.5">
            <Icon className="size-5">
              <path d="M3 8l10-6 14 4v16l-12 7-12-5z" fill="url(#blue)" stroke="#2d5d7a" />
              <path d="M3 8l12 4 12-6M15 12v17" stroke="#2d5d7a" />
            </Icon>
          </button>
        </div>
        <svg viewBox="0 0 13 28" className="h-full w-[13px]" fill="#cdd3dc">
          <path d="M0 0l12 14L0 28z" />
        </svg>
        <button className="flex items-center gap-1 pr-3.5 pl-0.5">
          <Icon className="size-5 opacity-70">
            <CutShape />
          </Icon>
          <span className="pt-1.5">Cut-Extrude1</span>
        </button>
      </div>
      <div className="mt-1.5 ml-[138px] flex items-center gap-1">
        <svg viewBox="0 0 14 14" className="size-3.5" fill="#c8d0d9" stroke="#5d6772" strokeLinejoin="round">
          <path d="M1 1h3v6h4V4l5 5-5 4v-3H1z" />
        </svg>
        <button className="flex h-[29px] items-center gap-1 border border-[#c0c8d2] bg-[#d0d5de] px-1">
          <Icon className="size-5">
            <path d="M5 8v11c0 5 3 8 8 8h16M14 3h9" stroke="#4e86a8" strokeWidth="3" />
            <path d="M7 0v13M0 6h14M2 2l10 9M12 2L2 11" stroke="#b07a20" strokeWidth="1.500" />
          </Icon>
          <span className="pt-1.5">Sketch3</span>
        </button>
      </div>
    </div>
  );
}

function Viewport() {
  return (
    <main className="relative flex min-w-0 flex-1 flex-col overflow-hidden">
      <Breadcrumb />
      <div className="mt-7 pl-[111px]">
        <Model />
      </div>
      <button aria-label="Hide panel" className="absolute top-[480px] left-0 flex h-12 w-3 items-center justify-center bg-[#484848]">
        <span className="size-1.5 rounded-full bg-[#dddddd]" />
      </button>
    </main>
  );
}

const ribbonTabs = ['Features', 'Sketch', 'Surfaces', 'Sheet Metal', 'Evaluate'];

export default function App() {
  const [tab, setTab] = useState('Features');
  return (
    <div className="flex h-screen flex-col overflow-hidden bg-[#484848] font-['Noto_Sans',sans-serif]">
      <SharedDefs />
      <header className="flex h-[47px] shrink-0 items-center border-b border-[#808080] pl-1.5">
        <Logo />
        <button aria-label="Show menu" className="mr-7 flex h-full w-[22px] shrink-0 items-center justify-center border-r border-[#303030]">
          <svg viewBox="0 0 8 14" className="h-3.5 w-2" fill="#111111" stroke="#999999">
            <path d="M1 1l6 6-6 6z" />
          </svg>
        </button>
        <ToolRow tools={quickTools} caret="w-[13px] text-[#eeeeee]" />
        <span className="mr-[63px] ml-auto text-[13px] text-[#c4c4c4]">Part2 *</span>
      </header>
      <div className="flex h-[45px] shrink-0 items-center border-b border-[#858585] pl-px">
        <ToolRow tools={featureTools} />
      </div>

      <div className="relative flex min-h-0 flex-1 flex-col bg-linear-to-b from-[#8695ab] to-[#a7b2c2]">
        <nav className="flex h-7 w-fit shrink-0 border-b border-[#707070] text-sm text-[#e8e8e8]">
          {ribbonTabs.map((t) => (
            <button
              key={t}
              onClick={() => setTab(t)}
              className={`border-r border-[#777777] whitespace-nowrap last:border-r-0 ${
                tab === t ? 'bg-[#484848] pr-2 pl-[5px] font-bold text-white' : 'bg-[#303030] px-[9px]'
              }`}
            >
              {t}
            </button>
          ))}
        </nav>
        <div className="flex min-h-0 flex-1">
          <aside className="flex shrink-0 border-r border-[#5c6470] bg-[#484848] pr-px">
            <ToolStrip />
            <SidePanel />
          </aside>
          <Viewport />
        </div>
        <div className="absolute top-1.5 right-0 opacity-90">
          <ToolRow tools={viewTools} caret="w-[14px] text-[#76859a]" />
        </div>
      </div>
    </div>
  );
}
